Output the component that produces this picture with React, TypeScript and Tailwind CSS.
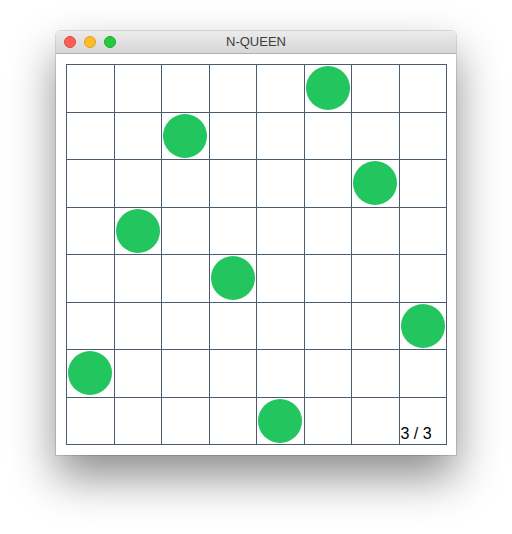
const queens = [5, 2, 6, 1, 3, 7, 0, 4];

const App = () => {
  return (
    <div className="h-[534px] w-[512px] bg-white pl-[56px] pt-[31px]" style={{ fontFamily: "'Liberation Sans', Arial, sans-serif" }}>
      <div className="w-[400px] overflow-hidden rounded-t-[5px] bg-white shadow-[0_22px_45px_rgba(0,0,0,0.45),0_0_0_1px_rgba(0,0,0,0.12)]">
        <div className="relative flex h-[23px] items-center border-b border-[#b1b1b1] bg-gradient-to-b from-[#ececec] to-[#d6d6d6] px-[8px]">
          <div className="flex gap-[8px]">
            <span className="size-[12px] rounded-full border border-[#e2463f] bg-[#fc5f57]" />
            <span className="size-[12px] rounded-full border border-[#e1a116] bg-[#fdbc2e]" />
            <span className="size-[12px] rounded-full border border-[#14ae2b] bg-[#28c840]" />
          </div>
          <div className="absolute inset-0 flex items-center justify-center text-[13px] text-[#3d3d3d]">N-QUEEN</div>
        </div>
        <div className="p-[10px]">
          <div className="grid h-[381px] w-[381px] grid-cols-8 grid-rows-8 border-r border-b border-[#4b5b6e]">
            {queens.map((q, r) =>
              Array.from({ length: 8 }).map((_, c) => (
                <div key={`${r}-${c}`} className="relative flex items-center justify-center border-t border-l border-[#4b5b6e]">
                  {q === c && <span className="size-[44px] rounded-full bg-[#22c55e]" />}
                  {r === 7 && c === 7 && (
                    <span className="absolute bottom-[2px] left-[1px] text-[16px] leading-none text-black">3 / 3</span>
                  )}
                </div>
              ))
            )}
          </div>
        </div>
      </div>
    </div>
  );
};

export default App;
